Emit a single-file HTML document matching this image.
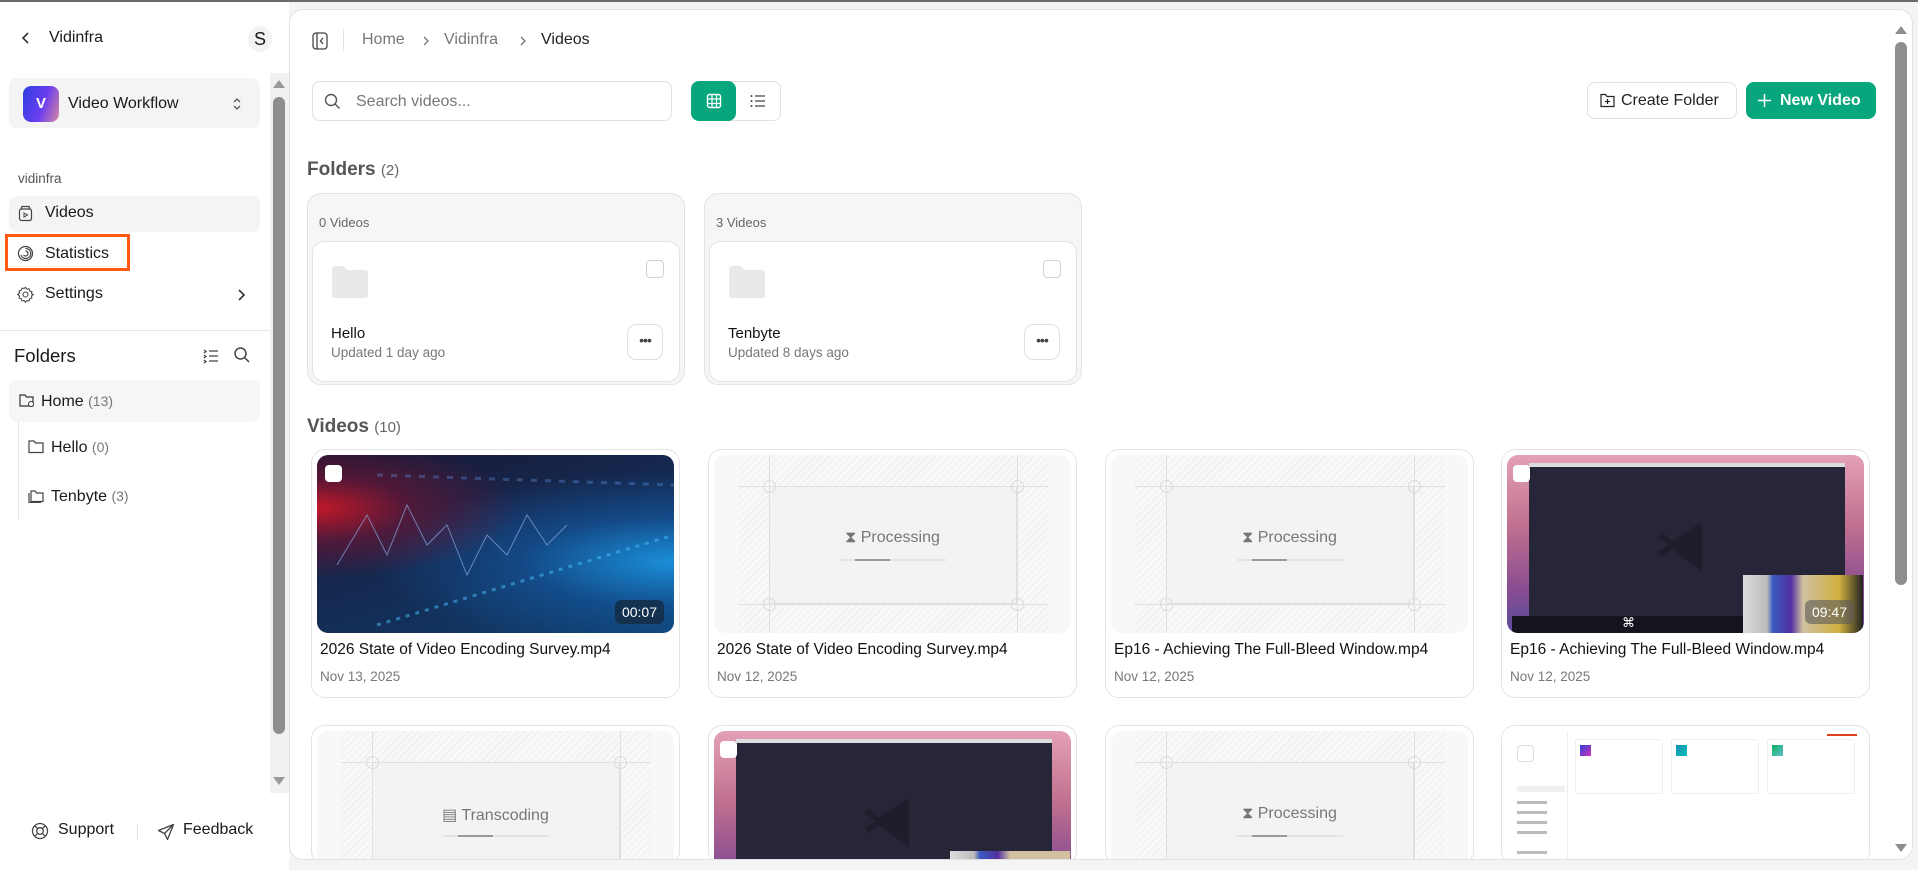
<!DOCTYPE html>
<html><head><meta charset="utf-8"><style>
*{box-sizing:border-box;margin:0;padding:0}
html,body{width:1918px;height:870px;overflow:hidden}
body{background:#f4f4f5;font-family:"Liberation Sans",sans-serif;color:#1a1a1a;position:relative}
.a{position:absolute}
.topline{left:0;top:0;width:1918px;height:2px;background:#6b6b6b}
.side{left:0;top:2px;width:289px;height:868px;background:#fff;overflow:hidden}
.main{left:289px;top:9px;width:1624px;height:851px;background:#fff;border:1px solid #e2e2e2;border-radius:14px;overflow:hidden}
.t{white-space:nowrap}
.card{border:1px solid #e4e4e4;border-radius:14px;background:#fff;overflow:hidden}
.thumb{position:absolute;left:5px;top:5px;width:357px;height:178px;border-radius:11px;overflow:hidden}
.proc{background:#f7f8f9}
.hatch{position:absolute;left:24px;top:0;width:310px;height:178px;background:repeating-linear-gradient(135deg,#eeeeee 0 1px,#f8f8f8 1px 5px)}
.inner{position:absolute;left:55px;top:31px;width:248px;height:118px;background:#f3f3f3;border:1px solid #dedede}
.hl{position:absolute;left:24px;width:310px;height:1px;background:#e0e0e0}
.vl{position:absolute;top:0;width:1px;height:178px;background:#e0e0e0}
.ci{position:absolute;width:13px;height:13px;border:1px solid #dadada;border-radius:50%}
.ptxt{position:absolute;left:0;width:357px;top:74px;text-align:center;font-size:16px;color:#777}
.bar{position:absolute;left:126px;top:104px;width:106px;height:2px;background:#e3e3e8}
.bar i{position:absolute;left:15px;top:0;width:35px;height:2px;background:#999}
.vt{position:absolute;left:8px;top:191px;font-size:15.5px;color:#111}
.vd{position:absolute;left:8px;top:219px;font-size:13.5px;color:#777}
.cb{position:absolute;left:8px;top:10px;width:17px;height:17px;background:#fff;border-radius:4px}
.dur{position:absolute;right:10px;bottom:9px;background:rgba(20,40,60,.75);color:#fff;font-size:14px;padding:4px 7px;border-radius:6px}
</style></head><body>
<div class="a topline"></div>
<div class="a side">
  <svg class="a" style="left:20px;top:29px" width="12" height="14" viewBox="0 0 12 14"><path d="M8 2 L3 7 L8 12" fill="none" stroke="#333" stroke-width="1.6"/></svg>
  <div class="a t" style="left:49px;top:27px;font-size:16px">Vidinfra</div>
  <div class="a" style="left:248px;top:24px;width:24px;height:26px;border-radius:50%;background:#f2f2f2;text-align:center;font-size:18px;line-height:26px">S</div>
  <div class="a" style="left:9px;top:76px;width:251px;height:50px;background:#f4f4f5;border-radius:8px"></div>
  <div class="a" style="left:23px;top:84px;width:36px;height:36px;border-radius:8px;background:linear-gradient(110deg,#2d3fe0,#6a3df0 55%,#d98aa0);color:#fff;font-size:15px;font-weight:bold;text-align:center;line-height:36px">V</div>
  <div class="a t" style="left:68px;top:93px;font-size:16px">Video Workflow</div>
  <svg class="a" style="left:232px;top:94px" width="10" height="16" viewBox="0 0 10 16"><path d="M2 6 L5 3 L8 6 M2 10 L5 13 L8 10" fill="none" stroke="#555" stroke-width="1.3"/></svg>
  <div class="a t" style="left:18px;top:169px;font-size:13.5px;color:#555">vidinfra</div>
  <div class="a" style="left:9px;top:194px;width:251px;height:36px;background:#f4f4f5;border-radius:8px"></div>
  <svg class="a" style="left:18px;top:203px" width="15" height="17" viewBox="0 0 15 17"><rect x="1.5" y="4" width="12" height="11.5" rx="2" fill="none" stroke="#444" stroke-width="1.2"/><path d="M3 4 L4 1.5 H11 L12 4" fill="none" stroke="#444" stroke-width="1.2"/><path d="M6 8 L9.5 10 L6 12Z" fill="none" stroke="#444" stroke-width="1"/></svg>
  <div class="a t" style="left:45px;top:202px;font-size:16px">Videos</div>
  <div class="a" style="left:5px;top:232px;width:125px;height:37px;border:3px solid #ff5a14"></div>
  <svg class="a" style="left:17px;top:243px" width="17" height="17" viewBox="0 0 17 17"><circle cx="8.5" cy="8.5" r="7" fill="none" stroke="#444" stroke-width="1.2"/><path d="M8.5 3.5 A5 5 0 1 1 4 10" fill="none" stroke="#444" stroke-width="1.2"/><path d="M8.5 6 A2.5 2.5 0 1 1 6.5 10" fill="none" stroke="#444" stroke-width="1.2"/></svg>
  <div class="a t" style="left:45px;top:243px;font-size:16px">Statistics</div>
  <svg class="a" style="left:17px;top:284px" width="17" height="17" viewBox="0 0 24 24"><path d="M12 2l2 2.5 3-.5 1 3 3 1-.5 3L23 12l-2.5 2 .5 3-3 1-1 3-3-.5L12 23l-2-2.5-3 .5-1-3-3-1 .5-3L1 12l2.5-2-.5-3 3-1 1-3 3 .5z" fill="none" stroke="#444" stroke-width="1.5"/><circle cx="12" cy="12" r="3.5" fill="none" stroke="#444" stroke-width="1.5"/></svg>
  <div class="a t" style="left:45px;top:283px;font-size:16px">Settings</div>
  <svg class="a" style="left:236px;top:286px" width="10" height="14" viewBox="0 0 10 14"><path d="M3 2 L8 7 L3 12" fill="none" stroke="#333" stroke-width="1.6"/></svg>
  <div class="a" style="left:0;top:328px;width:270px;height:1px;background:#e5e5e5"></div>
  <div class="a t" style="left:14px;top:343px;font-size:18.5px">Folders</div>
  <svg class="a" style="left:202px;top:345px" width="18" height="18" viewBox="0 0 18 18"><path d="M7 4H16M7 9H16M7 14H16M2 3L4 4.5 2 6M2 8L4 9.5 2 11M2 13L4 14.5 2 16" fill="none" stroke="#444" stroke-width="1.3"/></svg>
  <svg class="a" style="left:233px;top:344px" width="18" height="18" viewBox="0 0 18 18"><circle cx="7.5" cy="7.5" r="5.5" fill="none" stroke="#444" stroke-width="1.5"/><path d="M11.5 11.5L16 16" stroke="#444" stroke-width="1.5"/></svg>
  <div class="a" style="left:9px;top:378px;width:251px;height:42px;background:#f6f6f7;border-radius:8px"></div>
  <svg class="a" style="left:19px;top:390px" width="17" height="16" viewBox="0 0 17 16"><path d="M1 3 H6 L7.5 5 H14 V14 H1Z" fill="none" stroke="#333" stroke-width="1.2"/><circle cx="12" cy="12" r="2.5" fill="#fff" stroke="#333" stroke-width="1"/></svg>
  <div class="a t" style="left:41px;top:391px;font-size:16px">Home <span style="color:#777;font-size:14px">(13)</span></div>
  <div class="a" style="left:18px;top:420px;width:1px;height:98px;background:#e6e6e6"></div>
  <svg class="a" style="left:28px;top:437px" width="17" height="15" viewBox="0 0 17 15"><path d="M1 2 H6 L7.5 4 H15 V13.5 H1Z" fill="none" stroke="#444" stroke-width="1.2"/></svg>
  <div class="a t" style="left:51px;top:437px;font-size:16px">Hello <span style="color:#777;font-size:14px">(0)</span></div>
  <svg class="a" style="left:28px;top:486px" width="17" height="15" viewBox="0 0 17 15"><path d="M3 3 H7 L8.5 5 H15 V13.5 H3Z M1 5 V14.5 H13" fill="none" stroke="#444" stroke-width="1.2"/></svg>
  <div class="a t" style="left:51px;top:486px;font-size:16px">Tenbyte <span style="color:#777;font-size:14px">(3)</span></div>
  <svg class="a" style="left:31px;top:820px" width="18" height="18" viewBox="0 0 18 18"><circle cx="9" cy="9" r="7.5" fill="none" stroke="#444" stroke-width="1.3"/><circle cx="9" cy="9" r="3.3" fill="none" stroke="#444" stroke-width="1.3"/><path d="M3.7 3.7L6.6 6.6M14.3 3.7L11.4 6.6M3.7 14.3L6.6 11.4M14.3 14.3L11.4 11.4" stroke="#444" stroke-width="1.3"/></svg>
  <div class="a t" style="left:58px;top:819px;font-size:16px">Support</div>
  <div class="a" style="left:137px;top:821px;width:1px;height:18px;background:#e2e2e2"></div>
  <svg class="a" style="left:157px;top:821px" width="18" height="18" viewBox="0 0 18 18"><path d="M16.5 1.5L1.5 7.5 7.5 10.5 10.5 16.5Z M7.5 10.5L16.5 1.5" fill="none" stroke="#444" stroke-width="1.3" stroke-linejoin="round"/></svg>
  <div class="a t" style="left:183px;top:819px;font-size:16px">Feedback</div>
  <div class="a" style="left:270px;top:71px;width:19px;height:720px;background:#f1f1f1"></div>
  <div class="a" style="left:273px;top:78px;width:0;height:0;border-left:6px solid transparent;border-right:6px solid transparent;border-bottom:8px solid #9a9a9a"></div>
  <div class="a" style="left:273px;top:95px;width:12px;height:637px;background:#8e8e8e;border-radius:6px"></div>
  <div class="a" style="left:273px;top:775px;width:0;height:0;border-left:6px solid transparent;border-right:6px solid transparent;border-top:8px solid #9a9a9a"></div>
</div>

<div class="a main">
  <svg class="a" style="left:22px;top:22px" width="16" height="18" viewBox="0 0 16 18"><rect x="1" y="1" width="14" height="16" rx="3" fill="none" stroke="#444" stroke-width="1.3"/><path d="M5 1V17M11 6L8.5 9 11 12" fill="none" stroke="#444" stroke-width="1.3"/></svg>
  <div class="a" style="left:53px;top:19px;width:1px;height:22px;background:#e2e2e2"></div>
  <div class="a t" style="left:72px;top:21px;font-size:16px;color:#777">Home</div>
  <svg class="a" style="left:132px;top:25px" width="8" height="12" viewBox="0 0 8 12"><path d="M2 2L6 6 2 10" fill="none" stroke="#777" stroke-width="1.3"/></svg>
  <div class="a t" style="left:154px;top:21px;font-size:16px;color:#777">Vidinfra</div>
  <svg class="a" style="left:229px;top:25px" width="8" height="12" viewBox="0 0 8 12"><path d="M2 2L6 6 2 10" fill="none" stroke="#777" stroke-width="1.3"/></svg>
  <div class="a t" style="left:251px;top:21px;font-size:16px;color:#222">Videos</div>

  <div class="a" style="left:22px;top:71px;width:360px;height:40px;border:1px solid #e0e0e0;border-radius:8px"></div>
  <svg class="a" style="left:34px;top:83px" width="17" height="17" viewBox="0 0 17 17"><circle cx="7" cy="7" r="5.5" fill="none" stroke="#555" stroke-width="1.4"/><path d="M11 11L15.5 15.5" stroke="#555" stroke-width="1.4"/></svg>
  <div class="a t" style="left:66px;top:83px;font-size:16px;color:#777">Search videos...</div>
  <div class="a" style="left:401px;top:71px;width:90px;height:40px;border:1px solid #e0e0e0;border-radius:8px"></div>
  <div class="a" style="left:401px;top:71px;width:45px;height:40px;background:#07a67c;border-radius:8px"></div>
  <svg class="a" style="left:416px;top:83px" width="16" height="16" viewBox="0 0 16 16"><rect x="1.5" y="1.5" width="13" height="13" rx="2" fill="none" stroke="#fff" stroke-width="1.4"/><path d="M1.5 6H14.5M1.5 10.5H14.5M6 1.5V14.5M10.5 1.5V14.5" stroke="#fff" stroke-width="1.2"/></svg>
  <svg class="a" style="left:460px;top:84px" width="16" height="14" viewBox="0 0 16 14"><path d="M5 2H15M5 7H15M5 12H15" stroke="#444" stroke-width="1.3"/><circle cx="1.5" cy="2" r="1" fill="#444"/><circle cx="1.5" cy="7" r="1" fill="#444"/><circle cx="1.5" cy="12" r="1" fill="#444"/></svg>

  <div class="a" style="left:1297px;top:72px;width:150px;height:37px;border:1px solid #e0e0e0;border-radius:8px"></div>
  <svg class="a" style="left:1310px;top:83px" width="15" height="15" viewBox="0 0 15 15"><path d="M1 1.5H5.5L7 3.5H14V13.5H1Z" fill="none" stroke="#222" stroke-width="1.2"/><path d="M7.5 6V11M5 8.5H10" stroke="#222" stroke-width="1.2"/></svg>
  <div class="a t" style="left:1331px;top:82px;font-size:16px;color:#222">Create Folder</div>
  <div class="a" style="left:1456px;top:72px;width:130px;height:37px;background:#07a67c;border-radius:8px"></div>
  <svg class="a" style="left:1467px;top:83px" width="15" height="15" viewBox="0 0 15 15"><path d="M7.5 1V14M1 7.5H14" stroke="#fff" stroke-width="1.5"/></svg>
  <div class="a t" style="left:1490px;top:82px;font-size:16px;color:#fff;font-weight:bold">New Video</div>

  <div class="a t" style="left:17px;top:149px;font-size:19px;color:#555;font-weight:bold">Folders <span style="font-size:15px;font-weight:normal;color:#666">(2)</span></div>

  <div class="a" style="left:17px;top:183px;width:378px;height:192px;background:#f6f6f7;border:1px solid #e3e3e3;border-radius:14px">
    <div class="a t" style="left:11px;top:21px;font-size:13px;color:#666">0 Videos</div>
    <div class="a card" style="left:4px;top:47px;width:368px;height:141px;border-radius:12px">
      <svg class="a" style="left:19px;top:24px" width="36" height="32" viewBox="0 0 36 32"><path d="M0 3Q0 0 3 0H12L15 4H33Q36 4 36 7V29Q36 32 33 32H3Q0 32 0 29Z" fill="#e9e9eb"/></svg>
      <div class="a" style="left:333px;top:18px;width:18px;height:18px;border:1px solid #d0d0d0;border-radius:4px"></div>
      <div class="a t" style="left:18px;top:83px;font-size:15px;color:#111">Hello</div>
      <div class="a t" style="left:18px;top:103px;font-size:13.5px;color:#777">Updated 1 day ago</div>
      <div class="a" style="left:314px;top:82px;width:36px;height:36px;border:1px solid #e0e0e0;border-radius:9px;text-align:center;font-size:14px;line-height:30px;color:#444;letter-spacing:-1px">•••</div>
    </div>
  </div>
  <div class="a" style="left:414px;top:183px;width:378px;height:192px;background:#f6f6f7;border:1px solid #e3e3e3;border-radius:14px">
    <div class="a t" style="left:11px;top:21px;font-size:13px;color:#666">3 Videos</div>
    <div class="a card" style="left:4px;top:47px;width:368px;height:141px;border-radius:12px">
      <svg class="a" style="left:19px;top:24px" width="36" height="32" viewBox="0 0 36 32"><path d="M0 3Q0 0 3 0H12L15 4H33Q36 4 36 7V29Q36 32 33 32H3Q0 32 0 29Z" fill="#e9e9eb"/></svg>
      <div class="a" style="left:333px;top:18px;width:18px;height:18px;border:1px solid #d0d0d0;border-radius:4px"></div>
      <div class="a t" style="left:18px;top:83px;font-size:15px;color:#111">Tenbyte</div>
      <div class="a t" style="left:18px;top:103px;font-size:13.5px;color:#777">Updated 8 days ago</div>
      <div class="a" style="left:314px;top:82px;width:36px;height:36px;border:1px solid #e0e0e0;border-radius:9px;text-align:center;font-size:14px;line-height:30px;color:#444;letter-spacing:-1px">•••</div>
    </div>
  </div>

  <div class="a t" style="left:17px;top:406px;font-size:19px;color:#555;font-weight:bold">Videos <span style="font-size:15px;font-weight:normal;color:#666">(10)</span></div>

  <div class="a card" style="left:21px;top:439px;width:369px;height:249px">
    <div class="thumb" style="background:radial-gradient(ellipse at 0% 30%,#c0182a 0,rgba(120,20,50,.6) 18%,transparent 40%),radial-gradient(ellipse at 100% 60%,#1a8ed8 0,rgba(20,100,180,.5) 30%,transparent 60%),linear-gradient(160deg,#1a1633,#142a52 50%,#0f3f6e)">
      <svg style="position:absolute;left:0;top:0" width="357" height="178"><path d="M20 110 L50 60 L70 100 L90 50 L110 90 L130 70 L150 120 L170 80 L190 100 L210 60 L230 90 L250 70" fill="none" stroke="#8aa8e0" stroke-width="1" opacity=".7"/><path d="M60 170 L357 80" stroke="#4bc0ff" stroke-width="3" stroke-dasharray="4 6" opacity=".5"/><path d="M60 20 L357 30" stroke="#6af" stroke-width="3" stroke-dasharray="6 8" opacity=".3"/></svg>
      <div class="cb"></div><div class="dur">00:07</div>
    </div>
    <div class="vt t">2026 State of Video Encoding Survey.mp4</div>
    <div class="vd t">Nov 13, 2025</div>
  </div>
  <div class="a card" style="left:418px;top:439px;width:369px;height:249px">
    <div class="thumb proc"><div class="hatch"></div><div class="inner"></div><div class="hl" style="top:31px"></div><div class="hl" style="top:149px"></div><div class="vl" style="left:55px"></div><div class="vl" style="left:303px"></div><div class="ci" style="left:49px;top:25px"></div><div class="ci" style="left:297px;top:25px"></div><div class="ci" style="left:49px;top:143px"></div><div class="ci" style="left:297px;top:143px"></div><div class="ptxt">⧗ Processing</div><div class="bar"><i></i></div></div>
    <div class="vt t">2026 State of Video Encoding Survey.mp4</div>
    <div class="vd t">Nov 12, 2025</div>
  </div>
  <div class="a card" style="left:815px;top:439px;width:369px;height:249px">
    <div class="thumb proc"><div class="hatch"></div><div class="inner"></div><div class="hl" style="top:31px"></div><div class="hl" style="top:149px"></div><div class="vl" style="left:55px"></div><div class="vl" style="left:303px"></div><div class="ci" style="left:49px;top:25px"></div><div class="ci" style="left:297px;top:25px"></div><div class="ci" style="left:49px;top:143px"></div><div class="ci" style="left:297px;top:143px"></div><div class="ptxt">⧗ Processing</div><div class="bar"><i></i></div></div>
    <div class="vt t">Ep16 - Achieving The Full-Bleed Window.mp4</div>
    <div class="vd t">Nov 12, 2025</div>
  </div>
  <div class="a card" style="left:1211px;top:439px;width:369px;height:249px">
    <div class="thumb" style="background:linear-gradient(180deg,#e4a0b8,#c0708e 40%,#8a4d92 75%,#5a4a9a)">
      <div style="position:absolute;left:22px;top:8px;width:316px;height:4px;background:#ddd"></div>
      <div style="position:absolute;left:22px;top:12px;width:316px;height:150px;background:#272638"></div>
      <svg style="position:absolute;left:150px;top:62px" width="60" height="60" viewBox="0 0 60 60"><path d="M45 5 L45 55 L15 32 L5 40 L0 35 L12 28 L0 20 L5 15 L15 24Z" fill="#1e1d2c"/></svg>
      <div style="position:absolute;left:5px;top:161px;width:240px;height:17px;background:#15141e"></div>
      <div style="position:absolute;left:115px;top:160px;color:#fff;font-size:13px">⌘</div>
      <div style="position:absolute;left:236px;top:120px;width:120px;height:58px;background:linear-gradient(90deg,#ddd,#bbb 20%,#3a5ac0 25%,#5030a0 40%,#d0c0a0 50%,#d0b040 80%,#222)"></div>
      <div style="position:absolute;left:6px;top:10px;width:17px;height:17px;background:#fff;border-radius:4px"></div>
      <div class="dur" style="background:rgba(90,90,90,.6)">09:47</div>
    </div>
    <div class="vt t">Ep16 - Achieving The Full-Bleed Window.mp4</div>
    <div class="vd t">Nov 12, 2025</div>
  </div>

  <div class="a card" style="left:21px;top:715px;width:369px;height:140px">
    <div class="thumb proc"><div class="hatch"></div><div class="inner"></div><div class="hl" style="top:31px"></div><div class="hl" style="top:149px"></div><div class="vl" style="left:55px"></div><div class="vl" style="left:303px"></div><div class="ci" style="left:49px;top:25px"></div><div class="ci" style="left:297px;top:25px"></div><div class="ci" style="left:49px;top:143px"></div><div class="ci" style="left:297px;top:143px"></div><div class="ptxt">▤ Transcoding</div><div class="bar"><i></i></div></div>
  </div>
  <div class="a card" style="left:418px;top:715px;width:369px;height:140px">
    <div class="thumb" style="background:linear-gradient(180deg,#e4a0b8,#c0708e 40%,#8a4d92 75%,#5a4a9a)">
      <div style="position:absolute;left:22px;top:8px;width:316px;height:4px;background:#ddd"></div>
      <div style="position:absolute;left:22px;top:12px;width:316px;height:150px;background:#272638"></div>
      <svg style="position:absolute;left:150px;top:62px" width="60" height="60" viewBox="0 0 60 60"><path d="M45 5 L45 55 L15 32 L5 40 L0 35 L12 28 L0 20 L5 15 L15 24Z" fill="#1e1d2c"/></svg>
      <div style="position:absolute;left:236px;top:120px;width:120px;height:58px;background:linear-gradient(90deg,#ddd,#bbb 20%,#3a5ac0 25%,#5030a0 40%,#d0c0a0 50%)"></div>
      <div style="position:absolute;left:6px;top:10px;width:17px;height:17px;background:#fff;border-radius:4px"></div>
    </div>
  </div>
  <div class="a card" style="left:815px;top:715px;width:369px;height:140px">
    <div class="thumb proc"><div class="hatch"></div><div class="inner"></div><div class="hl" style="top:31px"></div><div class="hl" style="top:149px"></div><div class="vl" style="left:55px"></div><div class="vl" style="left:303px"></div><div class="ci" style="left:49px;top:25px"></div><div class="ci" style="left:297px;top:25px"></div><div class="ci" style="left:49px;top:143px"></div><div class="ci" style="left:297px;top:143px"></div><div class="ptxt">⧗ Processing</div><div class="bar"><i></i></div></div>
  </div>
  <div class="a card" style="left:1211px;top:715px;width:369px;height:140px">
    <div class="thumb" style="background:#fff">
      <div style="position:absolute;left:60px;top:0;width:1px;height:178px;background:#eee"></div>
      <div style="position:absolute;left:10px;top:55px;width:48px;height:6px;background:#f0f0f0"></div>
      <div style="position:absolute;left:10px;top:70px;width:30px;height:3px;background:#bbb"></div>
      <div style="position:absolute;left:10px;top:80px;width:30px;height:3px;background:#bbb"></div>
      <div style="position:absolute;left:10px;top:90px;width:30px;height:3px;background:#bbb"></div>
      <div style="position:absolute;left:10px;top:100px;width:30px;height:3px;background:#bbb"></div>
      <div style="position:absolute;left:10px;top:120px;width:30px;height:3px;background:#bbb"></div>
      <div style="position:absolute;left:68px;top:8px;width:88px;height:55px;border:1px solid #eee;border-radius:3px"></div>
      <div style="position:absolute;left:164px;top:8px;width:88px;height:55px;border:1px solid #eee;border-radius:3px"></div>
      <div style="position:absolute;left:260px;top:8px;width:88px;height:55px;border:1px solid #eee;border-radius:3px"></div>
      <div style="position:absolute;left:73px;top:14px;width:11px;height:11px;background:linear-gradient(135deg,#3040d0,#d030c0)"></div>
      <div style="position:absolute;left:169px;top:14px;width:11px;height:11px;background:linear-gradient(135deg,#1090b0,#10c0c0)"></div>
      <div style="position:absolute;left:265px;top:14px;width:11px;height:11px;background:linear-gradient(135deg,#10b060,#60c0d0)"></div>
      <div style="position:absolute;left:320px;top:3px;width:30px;height:2px;background:#e04020"></div>
      <div style="position:absolute;left:10px;top:14px;width:17px;height:17px;background:#fff;border:1px solid #ddd;border-radius:4px"></div>
    </div>
  </div>

  <div class="a" style="left:1604px;top:8px;width:18px;height:836px;background:#fff"></div>
  <div class="a" style="left:1605px;top:16px;width:0;height:0;border-left:6px solid transparent;border-right:6px solid transparent;border-bottom:8px solid #8e8e8e"></div>
  <div class="a" style="left:1605px;top:32px;width:12px;height:543px;background:#8e8e8e;border-radius:6px"></div>
  <div class="a" style="left:1605px;top:834px;width:0;height:0;border-left:6px solid transparent;border-right:6px solid transparent;border-top:8px solid #8e8e8e"></div>
</div>
</body></html>
